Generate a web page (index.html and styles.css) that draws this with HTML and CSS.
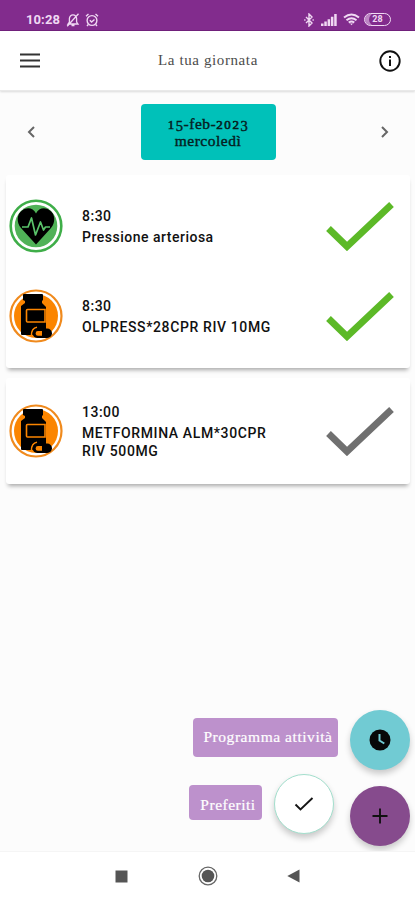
FILE: index.html
```html
<!DOCTYPE html>
<html lang="it">
<head>
<meta charset="utf-8">
<meta name="viewport" content="width=device-width, initial-scale=1">
<title>La tua giornata</title>
<link rel="stylesheet" href="styles.css">
</head>
<body>
<svg width="0" height="0" class="defs" aria-hidden="true">
  <symbol id="bottle" viewBox="0 0 54 54">
    <circle cx="27" cy="27" r="25.5" fill="#fff" stroke="#f08a1d" stroke-width="2.2"/>
    <circle cx="27" cy="27" r="22" fill="#fb8500"/>
    <path d="M15 5h18q1 0 1 1v5l-1 1v2l4 4v28H13q-1 0-1-1V17l4-3v-2l-2-1V6q0-1 1-1z" fill="#000"/>
    <path d="M36 20.500H18.500q-1 0-1 1v10.500q0 1 1 1H36z" fill="#000" stroke="#fb8500" stroke-width="1.600"/>
    <path d="M28 38.300q-5.500 1-5.500 8" fill="none" stroke="#fb8500" stroke-width="1.600"/>
    <rect x="23.500" y="39.500" width="19.500" height="9.500" rx="4.750" fill="#000"/>
    <path d="M33 42h-4a2.400 2.400 0 0 0 0 4.800h4z" fill="#fb8500"/>
  </symbol>
  <symbol id="tick" viewBox="0 0 68 50">
    <path d="M2.500 27.500 21 45.500 65.500 3.500" fill="none" stroke="currentColor" stroke-width="6.800"/>
  </symbol>
</svg>
<div class="app">
  <div class="status">
    <span class="clock">10:28</span>
    <svg class="bell" width="14" height="14" viewBox="0 0 14 14" fill="none" stroke="currentColor" stroke-width="1.300"><path d="M2 11h10l-1.400-2V5.500a3.600 3.600 0 0 0-7.200 0V9zM5.500 12.500h3M12.500.800 1.200 13.200"/></svg>
    <svg width="14" height="14" viewBox="0 0 14 14" fill="none" stroke="currentColor" stroke-width="1.400"><circle cx="7" cy="7.500" r="4.900"/><path d="M1 3.200 3.500 1M13 3.200 10.500 1M4.800 7.200 6.600 9l2.900-2.600M3.300 11.500 2 13M10.700 11.500 12 13"/></svg>
    <span class="spacer"></span>
    <svg class="bt" width="10" height="14" viewBox="0 0 10 14" fill="none" stroke="currentColor" stroke-width="1.400"><path d="M2 4l6 6-3 3V1l3 3-6 6M.2 7h1.300M8.500 7h1.300"/></svg>
    <svg class="signal" width="16" height="12" viewBox="0 0 16 12" fill="currentColor"><path d="M0 9.500h2.500V12H0zM3.300 7.500h2.500V12H3.300zM6.600 5.200h2.500V12H6.600zM9.900 2.700h2.500V12H9.900zM13.200 0h2.500v12h-2.500z"/></svg>
    <svg class="wifi" width="17" height="13" viewBox="0 0 17 13" fill="none" stroke="currentColor" stroke-width="2"><path d="M1 4.500q7.500-6 15 0M3.500 7.200q5-4 10 0M5.800 9.600q2.700-2.200 5.400 0"/><path d="m7 10.500 1.500 1.800 1.500-1.800z" fill="currentColor" stroke="none"/></svg>
    <span class="battery">28</span>
  </div>

  <header class="bar">
    <svg width="20" height="16" viewBox="0 0 20 16"><path d="M0 1.500h20M0 7.500h20M0 13.500h20" stroke="#333" stroke-width="2"/></svg>
    <h1>La tua giornata</h1>
    <svg width="22" height="22" viewBox="0 0 22 22"><circle cx="11" cy="11" r="9.700" fill="#fff" stroke="#111" stroke-width="1.900"/><path d="M11 9.500v6.500M11 6v2" stroke="#111" stroke-width="2"/></svg>
  </header>

  <main>
    <div class="day">
      <svg width="8" height="12" viewBox="0 0 8 12"><path d="M7 1 2 6l5 5" fill="none" stroke="#666" stroke-width="2"/></svg>
      <div class="date"><span><span class="low">1</span><span class="desc">5</span>-feb-<span class="low">202</span><span class="desc">3</span></span><span>mercoledì</span></div>
      <svg width="8" height="12" viewBox="0 0 8 12"><path d="m1 1 5 5-5 5" fill="none" stroke="#666" stroke-width="2"/></svg>
    </div>

    <section class="card first">
      <div class="row">
        <svg class="badge" viewBox="0 0 54 54"><circle cx="27" cy="27" r="25.300" fill="#fff" stroke="#3fae49" stroke-width="2.600"/><circle cx="27" cy="27" r="21.300" fill="#50b257"/><path d="M27 45.500 12 29C7 23 8 15 13 11.500 18 7.500 24.500 9 27 14.500 29.500 9 36 7.500 41 11.500 46 15 47 23 42 29z" fill="#000"/><path d="M13 28h6l3.500-9 4 17 5-13 3 8 2-3h4.500" fill="none" stroke="#5ac36a" stroke-width="1.700" stroke-linejoin="round"/></svg>
        <div class="text"><time>8:30</time><p>Pressione arteriosa</p></div>
        <svg class="tick"><use href="#tick"/></svg>
      </div>
      <div class="row">
        <svg class="badge"><use href="#bottle"/></svg>
        <div class="text"><time>8:30</time><p class="drug">OLPRESS*28CPR RIV 10MG</p></div>
        <svg class="tick"><use href="#tick"/></svg>
      </div>
    </section>

    <section class="card second">
      <div class="row">
        <svg class="badge"><use href="#bottle"/></svg>
        <div class="text"><time>13:00</time><p class="drug">METFORMINA ALM*30CPR<br>RIV 500MG</p></div>
        <svg class="tick pending"><use href="#tick"/></svg>
      </div>
    </section>

    <div class="actions">
      <div class="action">
        <span class="label wide">Programma attività</span>
        <span class="fab teal"><svg width="22" height="22" viewBox="0 0 22 22"><circle cx="11" cy="11" r="10.500" fill="#080808"/><path d="M10.500 5v6.500l4.800 3" fill="none" stroke="#71cbd3" stroke-width="2"/></svg></span>
      </div>
      <div class="action">
        <span class="label short">Preferiti</span>
        <span class="fab white"><svg width="20" height="16" viewBox="0 0 20 16"><path d="m1.500 8.500 5 5L18.500 2" fill="none" stroke="#151515" stroke-width="1.900"/></svg></span>
        <span class="fab purple"><svg width="16" height="16" viewBox="0 0 16 16"><path d="M8 .500v15M.500 8h15" stroke="#111" stroke-width="1.900"/></svg></span>
      </div>
    </div>
  </main>

  <nav>
    <svg width="13" height="13" viewBox="0 0 13 13"><path d="M.500.500h12v12H.500z" fill="#555"/></svg>
    <svg width="20" height="20" viewBox="0 0 20 20"><circle cx="10" cy="10" r="8.800" fill="none" stroke="#666" stroke-width="1.300"/><circle cx="10" cy="10" r="6.300" fill="#555"/></svg>
    <svg width="13" height="14" viewBox="0 0 13 14"><path d="M12.500.500v13L.300 7z" fill="#555"/></svg>
  </nav>
</div>
</body>
</html>
```
FILE: styles.css
```css
* { box-sizing: border-box; }
body { margin: 0; background: #fcfcfc; color: #111; font-family: Roboto, "Liberation Sans", sans-serif; }
svg { display: block; flex: none; }
.defs { position: absolute; }
h1, p { margin: 0; }
.app { display: flex; flex-direction: column; width: 415px; height: 900px; overflow: hidden; }

.status { display: flex; align-items: center; height: 31px; padding: 9px 24px 0 26px; background: #822c8d; border-bottom: 1px solid #71217c; color: #f0d9f3; flex: none; }
.clock { font-size: 13px; font-weight: 700; letter-spacing: .1px; width: 40px; }
.bell { margin-right: 5px; }
.spacer { flex: 1; }
.bt { margin-right: 7px; }
.signal { margin-right: 6px; }
.wifi { margin-right: 4px; }
.battery { width: 27px; height: 13px; border: 1.5px solid; border-radius: 7px; font-size: 9px; font-weight: 700; line-height: 11px; text-align: center; box-shadow: inset 5px 0 0 -1px #bd85c4; }

.bar { display: flex; align-items: center; justify-content: space-between; height: 60px; padding: 0 14px 0 20px; background: #fff; border-bottom: 1px solid #e9e9e9; box-shadow: 0 1px 2px #0002; flex: none; }
h1 { margin-right: 3px; font: 400 15px "Liberation Serif", serif; letter-spacing: .6px; color: #4c4c4c; }

main { display: flex; flex-direction: column; flex: 1; padding: 13px 5px 0 6px; }
.day { display: flex; align-items: center; justify-content: space-between; height: 56px; padding: 0 21px; flex: none; }
.date { display: flex; flex-direction: column; align-items: center; justify-content: center; width: 135px; height: 56px; border-radius: 4px; background: #00c1b9; font: 400 15.5px/17px "Liberation Serif", serif; letter-spacing: .5px; color: #06201f; -webkit-text-stroke: .4px; }
.date > span { height: 17px; }
.low { font-size: 13px; letter-spacing: 1.6px; -webkit-text-stroke: .6px; }
.desc { font-size: 14.5px; vertical-align: -2px; line-height: 1px; }

.card { background: #fff; border-radius: 3px; box-shadow: 0 4px 4px -2px #0005; flex: none; }
.first { height: 193px; margin-top: 15px; padding-top: 6px; }
.second { height: 106px; margin-top: 10px; padding-top: 8px; }
.row { display: flex; align-items: center; height: 90px; padding: 0 16px 0 3px; }
.badge { width: 54px; height: 54px; }
.text { flex: 1; padding-left: 19px; font-size: 14px; font-weight: 500; letter-spacing: .5px; }
time { display: block; line-height: 20px; }
.text p { line-height: 18px; padding-top: 2px; }
.text .drug { letter-spacing: .62px; white-space: nowrap; }
.tick { width: 68px; height: 50px; color: #5cb927; }
.pending { color: #707070; }

.actions { display: flex; flex-direction: column; margin-top: auto; padding-bottom: 5px; }
.action { display: flex; align-items: center; justify-content: flex-end; }
.action + .action { align-items: flex-start; margin-top: 4px; }
.label { display: flex; align-items: center; justify-content: center; border-radius: 4px; background: #bd91cc; color: #fff; font: 400 15.5px "Liberation Serif", serif; -webkit-text-stroke: .2px; }
.wide { width: 145px; height: 39px; margin: 0 12px 6px 0; padding-left: 5px; letter-spacing: .55px; }
.short { width: 73px; height: 35px; margin: 11px 12px 0 0; padding: 4px 0 0 5px; letter-spacing: .5px; }
.fab { display: grid; place-items: center; width: 60px; height: 60px; border-radius: 50%; box-shadow: 0 4px 6px #0003; }
.teal { background: #71cbd3; }
.white { background: #fff; border: 1px solid #a3dfcd; margin-right: 16px; }
.purple { background: #864b8d; margin-top: 12px; }

nav { display: flex; align-items: center; justify-content: space-between; height: 49px; padding: 0 115px; background: #fff; border-top: 1px solid #f5f5f5; flex: none; z-index: 1; }
```
